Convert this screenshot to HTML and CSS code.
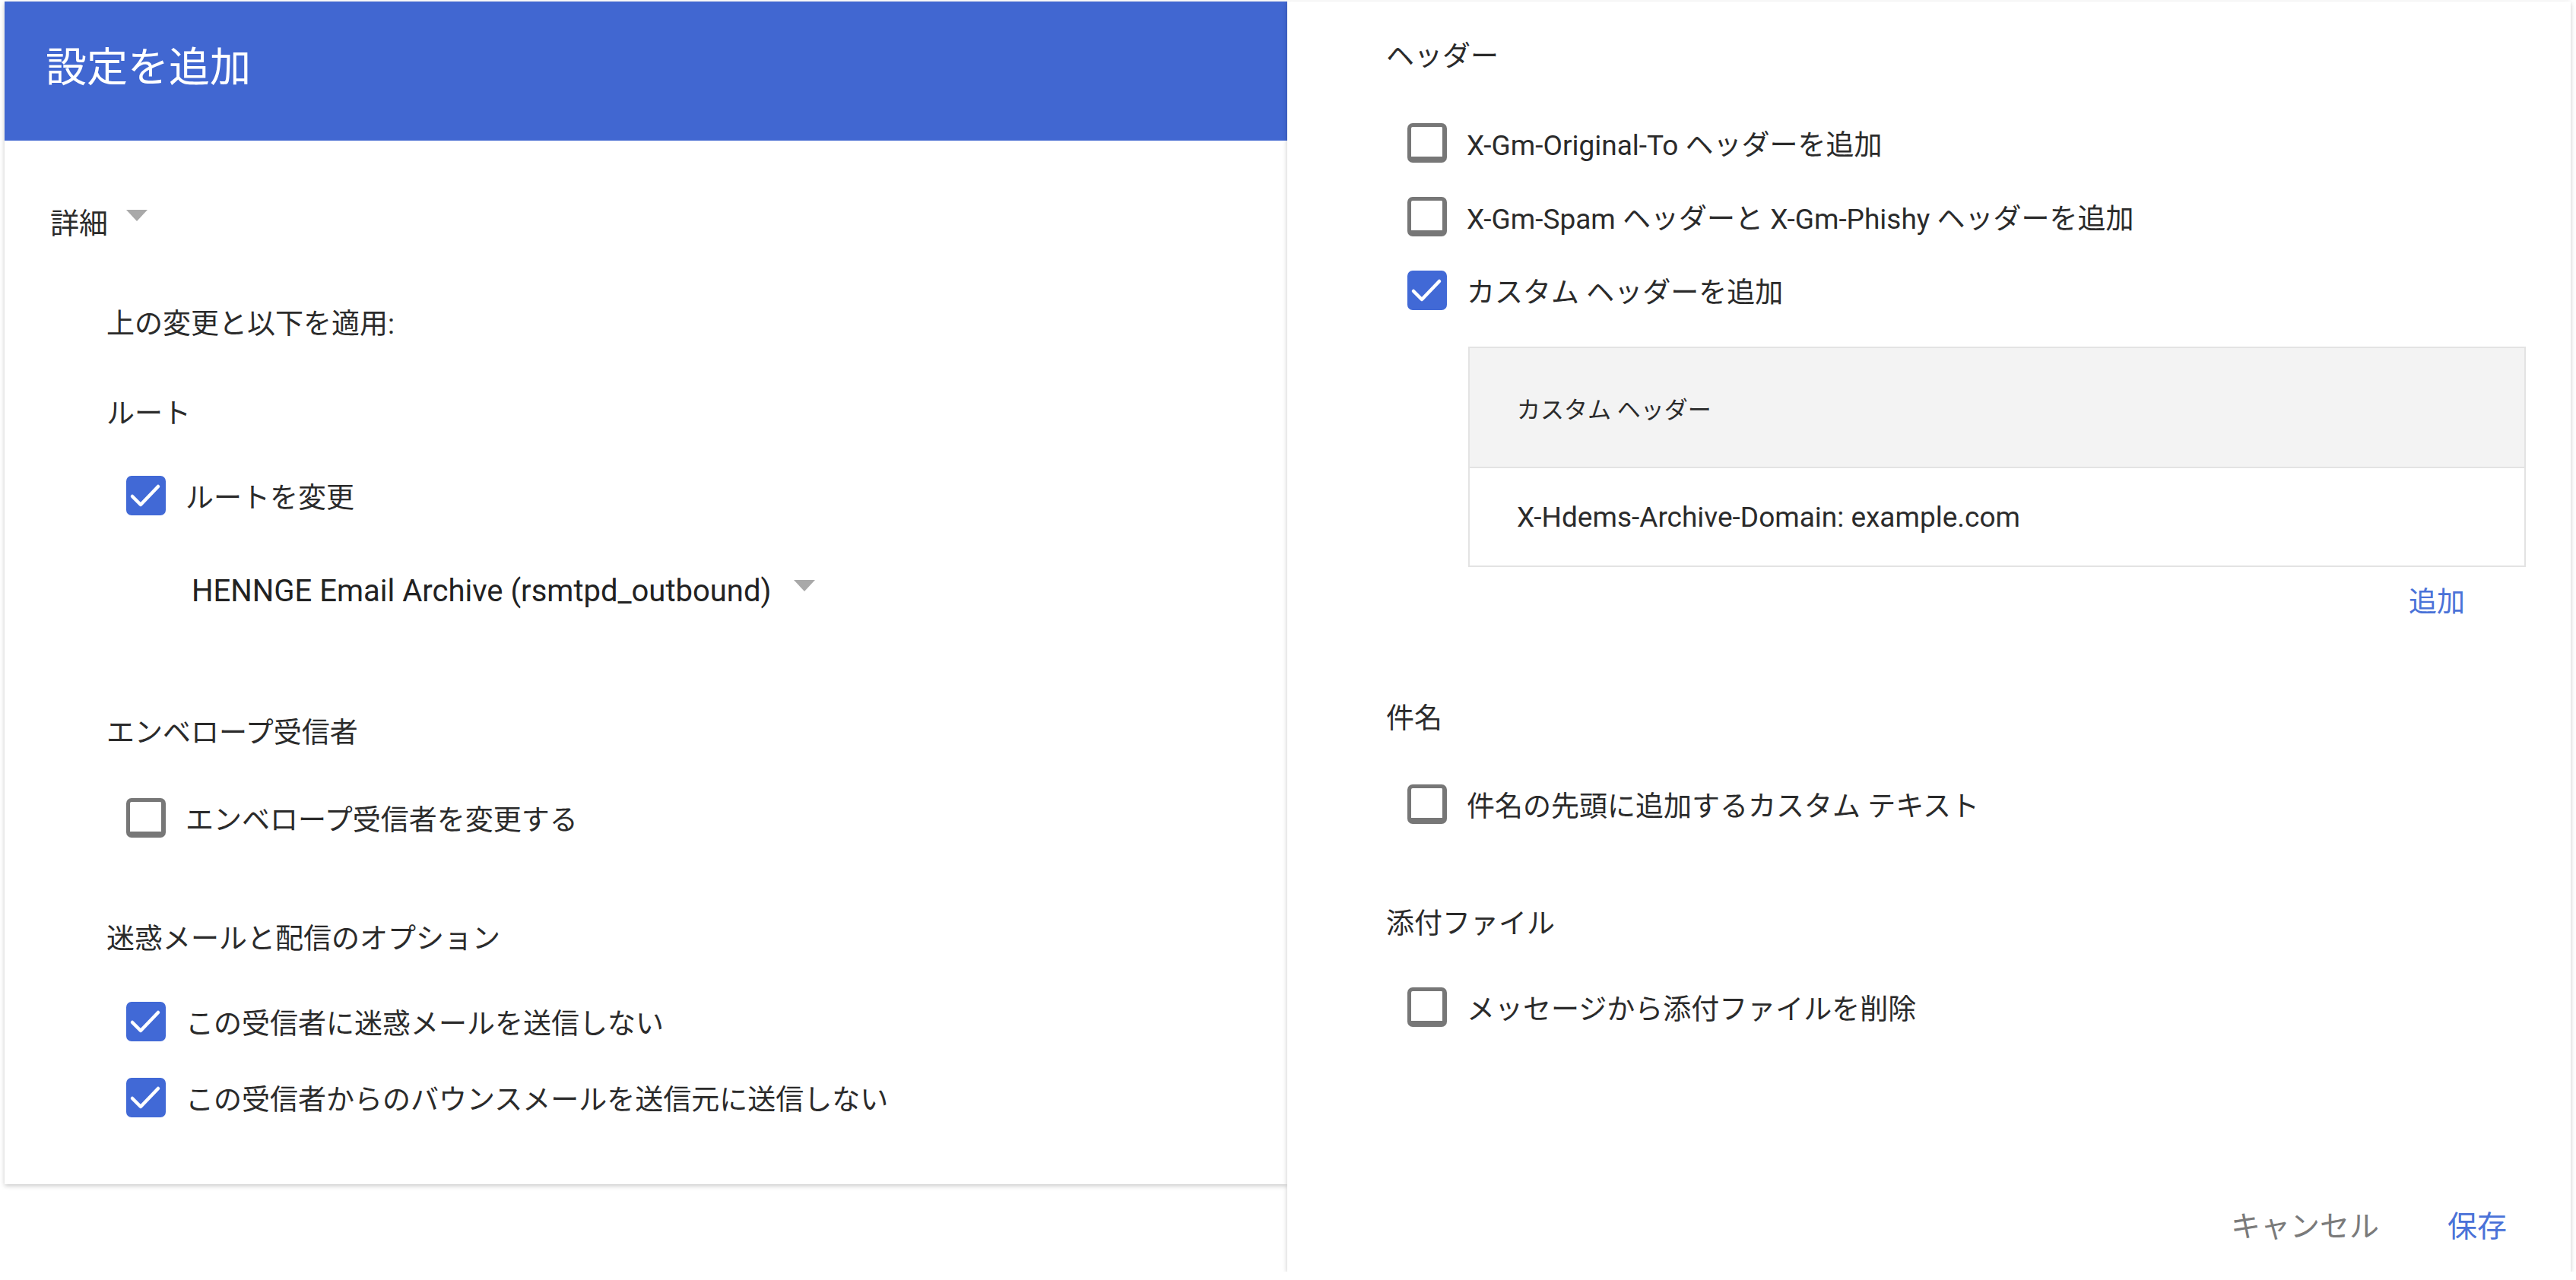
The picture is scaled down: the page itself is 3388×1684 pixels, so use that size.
FILE: index.html
```html
<!DOCTYPE html>
<html lang="ja">
<head>
    <meta charset="UTF-8">
    <meta name="viewport" content="width=device-width, initial-scale=1.0">
    <title>設定を追加</title>
    <link rel="stylesheet" href="styles.css">
</head>
<body>
    <div class="panel panel-left">
        <div class="panel-header">設定を追加</div>
        <div class="panel-body">
            <div class="details-toggle">詳細 <span class="caret"></span></div>
            <div class="indent">
                <div class="row note">上の変更と以下を適用:</div>

                <div class="row section-title route-title">ルート</div>
                <div class="row option route-option">
                    <span class="checkbox checked"><svg viewBox="0 0 52 52"><polyline points="8,27 19,38 42,14"/></svg></span>
                    ルートを変更
                </div>
                <div class="row select">
                    HENNGE Email Archive (rsmtpd_outbound) <span class="caret"></span>
                </div>

                <div class="row section-title envelope-title">エンベロープ受信者</div>
                <div class="row option envelope-option">
                    <span class="checkbox"></span>
                    エンベロープ受信者を変更する
                </div>

                <div class="row section-title spam-title">迷惑メールと配信のオプション</div>
                <div class="row option spam-option">
                    <span class="checkbox checked"><svg viewBox="0 0 52 52"><polyline points="8,27 19,38 42,14"/></svg></span>
                    この受信者に迷惑メールを送信しない
                </div>
                <div class="row option bounce-option">
                    <span class="checkbox checked"><svg viewBox="0 0 52 52"><polyline points="8,27 19,38 42,14"/></svg></span>
                    この受信者からのバウンスメールを送信元に送信しない
                </div>
            </div>
        </div>
    </div>

    <div class="panel panel-right">
        <div class="row section-title headers-title">ヘッダー</div>
        <div class="row option first-header">
            <span class="checkbox"></span>
            X-Gm-Original-To ヘッダーを追加
        </div>
        <div class="row option next-header">
            <span class="checkbox"></span>
            X-Gm-Spam ヘッダーと X-Gm-Phishy ヘッダーを追加
        </div>
        <div class="row option next-header">
            <span class="checkbox checked"><svg viewBox="0 0 52 52"><polyline points="8,27 19,38 42,14"/></svg></span>
            カスタム ヘッダーを追加
        </div>

        <div class="header-table">
            <div class="table-head">カスタム ヘッダー</div>
            <div class="table-row">X-Hdems-Archive-Domain: example.com</div>
        </div>
        <div class="row add-link"><span class="link">追加</span></div>

        <div class="row section-title subject-title">件名</div>
        <div class="row option subject-option">
            <span class="checkbox"></span>
            件名の先頭に追加するカスタム テキスト
        </div>

        <div class="row section-title attach-title">添付ファイル</div>
        <div class="row option attach-option">
            <span class="checkbox"></span>
            メッセージから添付ファイルを削除
        </div>

        <div class="actions">
            <span class="btn btn-cancel">キャンセル</span>
            <span class="btn btn-save">保存</span>
        </div>
    </div>
</body>
</html>
```

FILE: styles.css
```css
body {
    margin: 0;
    background: #ffffff;
    display: flex;
    align-items: flex-start;
    font-family: Roboto, "Noto Sans CJK JP", sans-serif;
    font-size: 37px;
    color: #2b2b2b;
}

.panel {
    background: #ffffff;
    box-shadow: 0 2px 6px rgba(0, 0, 0, 0.22);
    box-sizing: border-box;
    margin-top: 2px;
}

.panel-left {
    width: 1687px;
    height: 1556px;
    margin-left: 6px;
}

.panel-right {
    width: 1688px;
    height: 1671px;
    padding: 39px 0 33px 130px;
    display: flex;
    flex-direction: column;
    position: relative;
    z-index: 2;
}

.panel-header {
    height: 183px;
    background: #4167d1;
    color: #ffffff;
    font-size: 54px;
    display: flex;
    align-items: center;
    padding: 0 0 18px 54px;
    box-sizing: border-box;
}

.panel-body {
    padding-left: 60px;
}

.row {
    height: 60px;
    display: flex;
    align-items: center;
}

.details-toggle {
    height: 60px;
    margin-top: 75px;
    font-size: 38px;
    display: flex;
    align-items: center;
}

.caret {
    display: inline-block;
    width: 0;
    height: 0;
    border-left: 14px solid transparent;
    border-right: 14px solid transparent;
    border-top: 15px solid #a9a9a9;
    margin-left: 24px;
    margin-bottom: 14px;
}

.indent {
    padding-left: 74px;
}

.note { margin-top: 73px; }

.route-title { margin-top: 58px; }
.route-option { margin-top: 51px; }
.envelope-title { margin-top: 124px; }
.envelope-option { margin-top: 55px; }
.spam-title { margin-top: 96px; }
.spam-option { margin-top: 52px; }
.bounce-option { margin-top: 40px; }

.option {
    padding-left: 26px;
}

.select {
    margin-top: 65px;
    padding-left: 112px;
    font-size: 40px;
    color: #222;
}

.select .caret {
    margin-left: 30px;
    margin-bottom: 14px;
}

.checkbox {
    width: 52px;
    height: 52px;
    box-sizing: border-box;
    border: 5px solid #777777;
    border-width: 5px 6px 8px 5px;
    border-radius: 7px;
    margin-right: 26px;
    flex-shrink: 0;
}

.checkbox.checked {
    border: none;
    background: #4169d6;
}

.checkbox svg {
    display: block;
    width: 52px;
    height: 52px;
}

.checkbox polyline {
    fill: none;
    stroke: #ffffff;
    stroke-width: 4.5;
    stroke-linecap: round;
    stroke-linejoin: round;
}

/* right column */
.first-header { margin-top: 57px; padding-left: 28px; }
.next-header { margin-top: 37px; padding-left: 28px; }

.header-table {
    margin: 44px 59px 0 108px;
    border: 2px solid #e3e3e3;
}

.table-head {
    height: 156px;
    background: #f3f3f3;
    border-bottom: 2px solid #e3e3e3;
    display: flex;
    align-items: center;
    padding-left: 62px;
    font-size: 31px;
}

.table-row {
    height: 128px;
    display: flex;
    align-items: center;
    padding-left: 62px;
    font-size: 37px;
}

.add-link {
    margin-top: 13px;
    justify-content: flex-end;
    padding-right: 139px;
}

.link {
    color: #4a72d8;
    font-size: 37px;
}

.subject-title { margin-top: 93px; }
.subject-option { margin-top: 56px; padding-left: 28px; }
.attach-title { margin-top: 94px; }
.attach-option { margin-top: 53px; padding-left: 28px; }

.actions {
    margin-top: auto;
    height: 60px;
    display: flex;
    align-items: center;
    justify-content: flex-end;
    gap: 90px;
    padding-right: 84px;
}

.btn {
    font-size: 39px;
}

.btn-cancel { color: #7a7a7a; }
.btn-save { color: #4a72d8; }
```
